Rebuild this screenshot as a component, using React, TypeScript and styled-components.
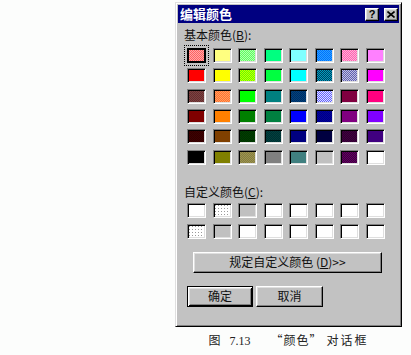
import React from 'react';
import styled, { createGlobalStyle } from 'styled-components';

const GlobalStyle = createGlobalStyle`
  html, body {
    margin: 0;
    padding: 0;
    background: #fcfdfc;
  }
  body {
    font-family: "Noto Sans CJK SC", "Liberation Sans", sans-serif;
  }
`;

const Page = styled.div`
  box-sizing: border-box;
  width: 411px;
  height: 355px;
  padding: 2px 0 0 175px;
`;

const Figure = styled.div`
  display: flex;
  flex-direction: column;
  align-items: center;
  width: 227px;
`;

const Window = styled.div`
  box-sizing: border-box;
  width: 227px;
  height: 325px;
  padding: 2px;
  background: #c2c2c2;
  border: 1px solid;
  border-color: #dfdfdf #000 #000 #dfdfdf;
  box-shadow: inset 1px 1px #fff, inset -1px -1px #808080;
  display: flex;
  flex-direction: column;
`;

const TitleBar = styled.div`
  height: 18px;
  background: #000080;
  display: flex;
  align-items: center;
  padding: 0 1px 0 2px;
`;

const TitleText = styled.span`
  color: #fff;
  font-size: 13px;
  font-weight: 700;
  line-height: 18px;
`;

const CaptionButtons = styled.div`
  margin-left: auto;
  display: flex;
  gap: 5px;
`;

const CaptionButton = styled.div`
  box-sizing: border-box;
  width: 14px;
  height: 13px;
  background: #c0c0c0;
  border: 1px solid;
  border-color: #fff #000 #000 #fff;
  box-shadow: inset -1px -1px #808080, inset 1px 1px #dfdfdf;
  display: flex;
  align-items: center;
  justify-content: center;
  font-family: "Liberation Sans", sans-serif;
  font-weight: 700;
  font-size: 11px;
  line-height: 11px;
  color: #000;
`;

const Body = styled.div`
  display: flex;
  flex-direction: column;
  padding: 5px 6px 0;
`;

const Label = styled.div<{ $top: number }>`
  margin-top: ${p => p.$top}px;
  font-size: 12px;
  line-height: 14px;
  color: #111;
`;

const SwatchGrid = styled.div<{ $top: number; $rowGap: number }>`
  display: grid;
  grid-template-columns: repeat(8, 19px);
  column-gap: 6.5px;
  row-gap: ${p => p.$rowGap}px;
  margin: ${p => p.$top}px 0 0 3px;
`;

const Swatch = styled.div<{ $fill: string; $selected?: boolean }>`
  box-sizing: border-box;
  width: 19px;
  height: 15px;
  background: ${p => p.$fill};
  border: 1px solid;
  border-color: ${p => (p.$selected ? '#000' : '#808080 #fff #fff #808080')};
  box-shadow: ${p => (p.$selected ? 'inset 0 0 0 1px #000' : 'inset 1px 1px #000, inset -1px -1px #dfdfdf')};
  outline: ${p => (p.$selected ? '1px dotted #000' : 'none')};
  outline-offset: 2px;
`;

const PushButton = styled.div<{ $width: number; $default?: boolean }>`
  box-sizing: border-box;
  width: ${p => p.$width}px;
  height: 21px;
  background: #c2c2c2;
  border: 1px solid;
  border-color: ${p => (p.$default ? '#000' : '#fff #000 #000 #fff')};
  box-shadow: ${p =>
    p.$default
      ? 'inset 1px 1px #fff, inset -1px -1px #000, inset 2px 2px #dfdfdf, inset -2px -2px #808080'
      : 'inset -1px -1px #808080, inset 1px 1px #dfdfdf'};
  display: flex;
  align-items: center;
  justify-content: center;
  font-size: 12px;
  line-height: 14px;
  color: #111;
`;

const WideButton = styled(PushButton)`
  margin: 13px 0 0 9px;
`;

const ButtonRow = styled.div`
  display: flex;
  gap: 3px;
  margin: 13px 0 0 3px;
`;

const Caption = styled.div`
  display: flex;
  align-items: baseline;
  margin-top: 6px;
  font-family: "Liberation Serif", "Noto Sans CJK SC", serif;
  font-size: 12px;
  line-height: 14px;
  color: #222;
`;

const CaptionPart = styled.span<{ $gap: number; $spacing?: number; $cjk?: boolean }>`
  margin-left: ${p => p.$gap}px;
  letter-spacing: ${p => p.$spacing ?? 0}px;
  font-family: ${p => (p.$cjk ? '"Noto Sans CJK SC", serif' : 'inherit')};
`;

const dither = (a: string, b: string) =>
  `repeating-conic-gradient(${a} 0 25%, ${b} 0 50%) 0 0 / 2px 2px`;

const dots = 'radial-gradient(circle, #9a9a9a 0.7px, transparent 0.9px) 0 0 / 3px 3px, #fff';

const basicColors: string[][] = [
  [dither('#ff6060', '#ffa8a8'), '#ffff80', dither('#60ff60', '#b0ffb0'), '#00ff80', '#80ffff', dither('#0070ff', '#2aa0ff'), dither('#ff60b0', '#ffb0d8'), '#ff80ff'],
  ['#ff0000', '#ffff00', dither('#60ff00', '#c8ff00'), '#00ff40', '#00ffff', dither('#00a0c0', '#004060'), dither('#6060b0', '#c0c0e0'), '#ff00ff'],
  [dither('#804040', '#603030'), dither('#ff7030', '#ffa060'), '#00ff00', '#008080', dither('#004080', '#003060'), dither('#6060ff', '#e0e0ff'), '#800040', '#ff0080'],
  ['#800000', '#ff8000', '#008000', '#008040', '#0000ff', dither('#0000a0', '#000080'), '#800080', '#8000ff'],
  [dither('#400000', '#300000'), '#804000', dither('#004000', '#003000'), dither('#004040', '#003030'), '#000080', '#000040', dither('#400040', '#300030'), '#400080'],
  ['#000000', '#808000', dither('#808040', '#a09050'), '#808080', '#408080', '#c0c0c0', dither('#400040', '#600060'), '#ffffff'],
];

const customColors: string[][] = [
  ['#fff', dots, '#c0c0c0', '#fff', '#fff', '#fff', '#fff', '#fff'],
  [dots, '#c0c0c0', '#fff', '#fff', '#fff', '#fff', '#fff', '#fff'],
];

const CloseIcon = () => (
  <svg width="8" height="7" viewBox="0 0 8 7">
    <path d="M0.5 0.5 L7.5 6.5 M7.5 0.5 L0.5 6.5" stroke="#000" strokeWidth="1.6" />
  </svg>
);

const App: React.FC = () => {
  return (
    <Page>
      <GlobalStyle />
      <Figure>
        <Window>
          <TitleBar>
            <TitleText>编辑颜色</TitleText>
            <CaptionButtons>
              <CaptionButton>?</CaptionButton>
              <CaptionButton>
                <CloseIcon />
              </CaptionButton>
            </CaptionButtons>
          </TitleBar>

          <Body>
            <Label $top={0}>
              基本颜色(<u>B</u>):
            </Label>
            <SwatchGrid $top={6} $rowGap={5.35}>
              {basicColors.map((row, r) =>
                row.map((fill, c) => (
                  <Swatch key={`b${r}-${c}`} $fill={fill} $selected={r === 0 && c === 0} />
                ))
              )}
            </SwatchGrid>

            <Label $top={20}>
              自定义颜色(<u>C</u>):
            </Label>
            <SwatchGrid $top={4} $rowGap={6}>
              {customColors.map((row, r) =>
                row.map((fill, c) => <Swatch key={`c${r}-${c}`} $fill={fill} />)
              )}
            </SwatchGrid>

            <WideButton $width={189}>
              规定自定义颜色 (<u>D</u>)&gt;&gt;
            </WideButton>

            <ButtonRow>
              <PushButton $width={66} $default>
                确定
              </PushButton>
              <PushButton $width={67}>取消</PushButton>
            </ButtonRow>
          </Body>
        </Window>

        <Caption>
          <CaptionPart $gap={0} $cjk>图</CaptionPart>
          <CaptionPart $gap={9}>7.13</CaptionPart>
          <CaptionPart $gap={20} $spacing={1} $cjk>“颜色”</CaptionPart>
          <CaptionPart $gap={4} $spacing={2} $cjk>对话框</CaptionPart>
        </Caption>
      </Figure>
    </Page>
  );
};

export default App;
